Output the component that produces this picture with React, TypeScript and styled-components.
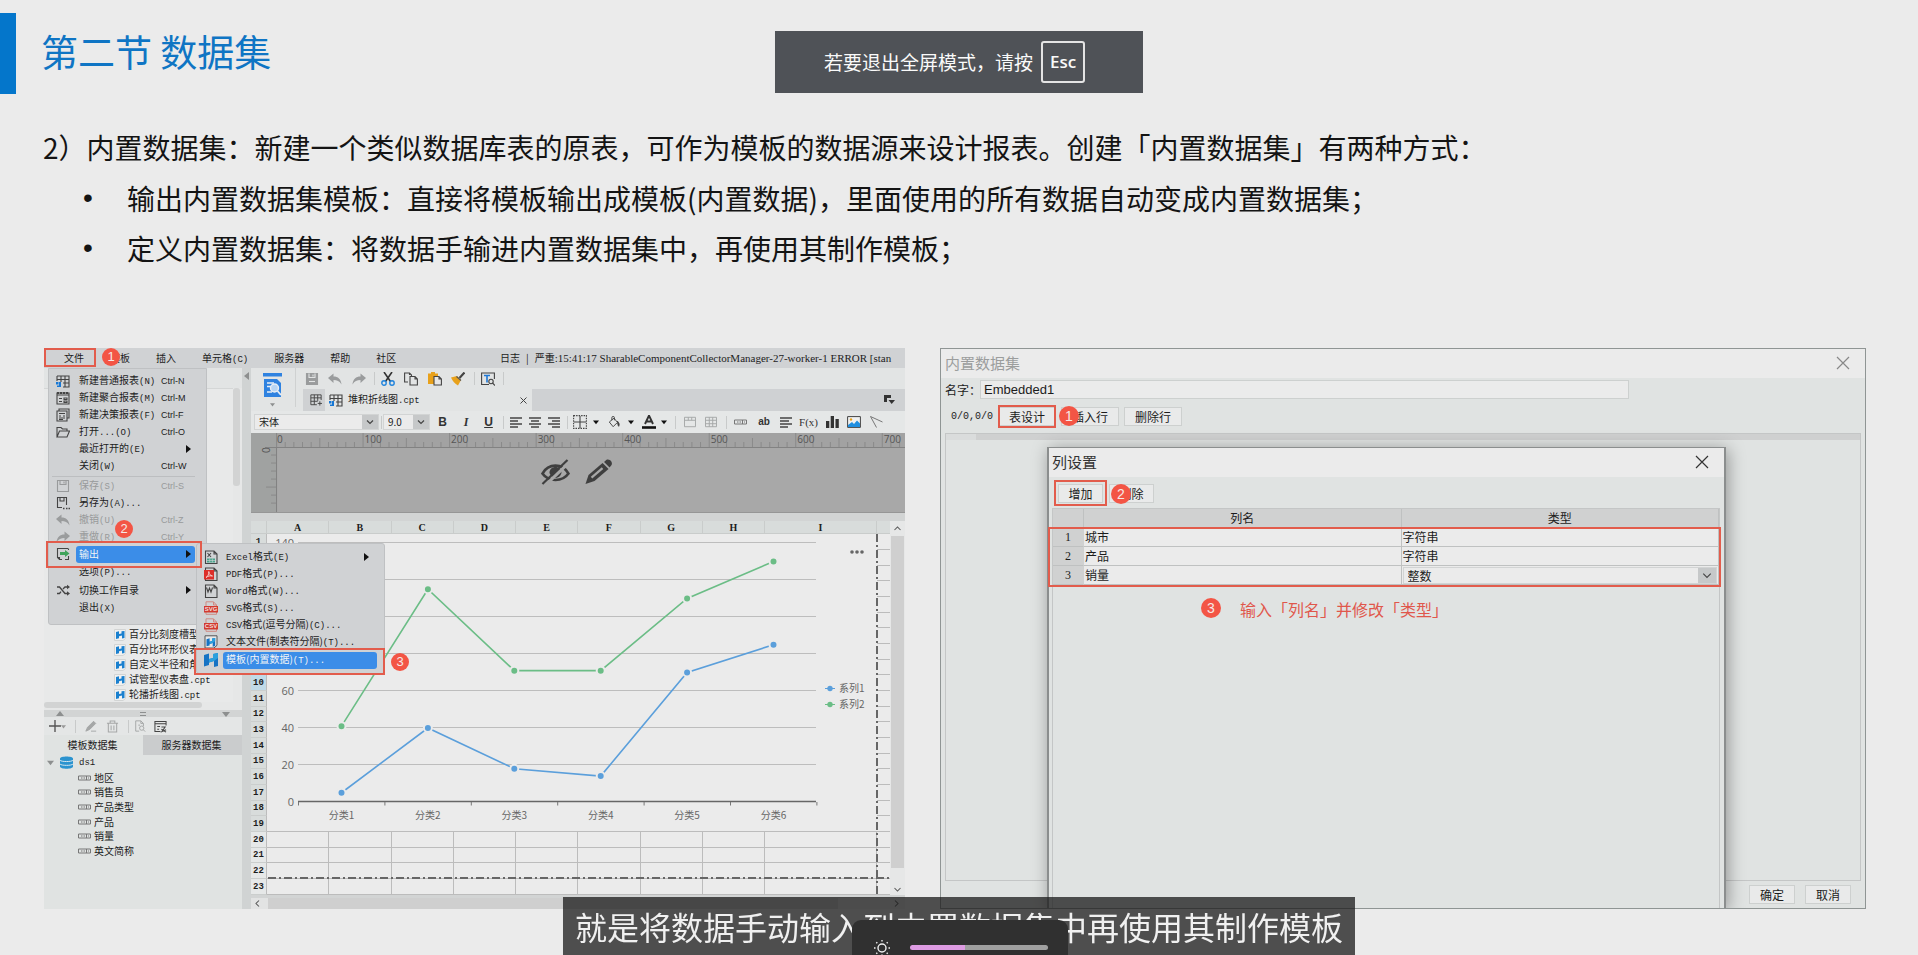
import React from "react";
import styled, { createGlobalStyle, css } from "styled-components";

const cjk = `"Noto Sans CJK SC", sans-serif`;
const mono = `"Liberation Mono", "Noto Sans CJK SC", monospace`;
const serif = `"Liberation Serif", "Noto Sans CJK SC", serif`;
const sans = `"Liberation Sans", "Noto Sans CJK SC", sans-serif`;

const c = {
  page: "#ebebeb",
  panel: "#e0e3e2",
  bar: "#d0d2d4",
  line: "#c4c6c6",
  red: "#e25c4c",
  badge: "#f35545",
  blue: "#3b8de8",
  ink: "#1c1c1c",
};

const GlobalStyle = createGlobalStyle`
  * { box-sizing: border-box; }
  body { margin: 0; background: ${c.page}; font-family: ${cjk}; color: ${c.ink}; }
  button, input, select { font: inherit; color: inherit; margin: 0; padding: 0; border: 0; background: none; border-radius: 0; }
  svg { display: block; flex: none; }
`;

/* ---------- slide ---------- */

const Slide = styled.main`
  min-height: 100vh;
  padding: 13px 0 46px;
  background: ${c.page};
`;
const SlideHead = styled.header`
  display: flex;
  align-items: center;
  gap: 25px;
  &::before {
    content: "";
    width: 16px;
    height: 81px;
    background: #0476cb;
  }
`;
const SlideTitle = styled.h1`
  margin: 0;
  padding-bottom: 5px;
  font-size: 37px;
  line-height: 48px;
  font-weight: 400;
  color: #0f75c4;
`;
const Notes = styled.section`
  padding: 28px 44px 0 43px;
  font-size: 28px;
  line-height: 50px;
  color: #141414;
`;
const Lead = styled.p`
  margin: 0;
  line-height: 51px;
`;
const Points = styled.ul`
  margin: 0;
  padding: 0 0 0 40px;
  list-style: none;
`;
const Point = styled.li`
  display: flex;
  &::before {
    content: "•";
    flex: none;
    width: 44px;
    font-family: ${sans};
  }
`;
const Figures = styled.section`
  display: grid;
  grid-template-columns: 861fr 926fr;
  gap: 35px;
  padding: 75px 52px 0 44px;
`;

/* ---------- annotations ---------- */

const Badge = styled.span<{ $x: number; $y: number; $big?: boolean }>`
  position: absolute;
  z-index: 5;
  left: ${(p) => p.$x}px;
  top: ${(p) => p.$y}px;
  width: ${(p) => (p.$big ? 20 : 18)}px;
  height: ${(p) => (p.$big ? 20 : 18)}px;
  border-radius: 50%;
  background: ${c.badge};
  color: #f6e9e7;
  font: 400 13px/18px ${sans};
  text-align: center;
  ${(p) => p.$big && "line-height: 20px; font-size: 14px;"}
`;
const redFrame = css<{ $inset: string }>`
  position: absolute;
  z-index: 4;
  inset: ${(p) => p.$inset};
  border: 2px solid ${c.red};
  pointer-events: none;
`;
const Frame = styled.span<{ $inset: string }>`
  ${redFrame}
`;
const Anchor = styled.div`
  position: relative;
  display: flex;
`;

/* ---------- designer window ---------- */

const Designer = styled.article`
  position: relative;
  min-width: 0;
  display: flex;
  flex-direction: column;
  overflow: hidden;
  background: #dcdede;
  font-size: 10px;
  line-height: 14px;
`;
const MenuBar = styled.nav`
  position: relative;
  display: flex;
  align-items: center;
  gap: 26px;
  height: 20px;
  padding-left: 20px;
  background: ${c.bar};
`;
const MenuTitle = styled.button`
  white-space: nowrap;
  line-height: 18px;
`;
const Key = styled.span`
  font: 9px/14px ${mono};
`;
const LogLine = styled.div`
  display: flex;
  gap: 6px;
  width: 405px;
  margin-left: auto;
  overflow: hidden;
  white-space: nowrap;
`;
const LogText = styled.span`
  font: 11px/14px ${serif};
`;
const Small = styled.span`
  font-family: ${cjk};
  font-size: 10px;
`;
const Work = styled.div`
  display: flex;
  flex: 1;
`;
const Side = styled.aside`
  width: 198px;
  flex: none;
  display: flex;
  flex-direction: column;
  background: ${c.panel};
`;
const TemplatePane = styled.div`
  display: flex;
  height: 334px;
  padding-top: 20px;
  background: #e2e4e4;
`;
const TemplateList = styled.ul`
  flex: 1;
  min-width: 0;
  margin: 0;
  padding: 0 0 0 70px;
  list-style: none;
  display: flex;
  flex-direction: column;
  justify-content: flex-end;
  background: #e8e9e9;
  border-top: 1px solid #d4d6d6;
  overflow: hidden;
`;
const TemplateItem = styled.li`
  display: flex;
  align-items: center;
  gap: 3px;
  height: 15px;
  white-space: nowrap;
`;
const SideScroll = styled.div`
  width: 9px;
  background: #e6e7e7;
  &::before {
    content: "";
    display: block;
    width: 7px;
    height: 98px;
    border-radius: 3px;
    background: #d2d3d3;
  }
`;
const SideHScroll = styled.div`
  height: 8px;
  background: #e6e7e7;
  &::before {
    content: "";
    display: block;
    width: 80%;
    height: 6px;
    border-radius: 3px;
    background: #d2d3d3;
  }
`;
const Splitter = styled.div`
  display: flex;
  align-items: center;
  justify-content: space-between;
  height: 7px;
  padding: 0 12px;
  background: #d2d4d4;
`;
const SideTools = styled.div`
  display: flex;
  align-items: center;
  height: 18px;
  padding-left: 5px;
  background: #e4e6e6;
`;
const Tabs = styled.div`
  display: grid;
  grid-template-columns: 1fr 1fr;
  height: 20px;
`;
const Tab = styled.button<{ $on?: boolean }>`
  padding-right: 2px;
  background: ${(p) => (p.$on ? c.panel : "#cacccd")};
`;
const Fields = styled.ul`
  flex: 1;
  margin: 0;
  padding: 0;
  list-style: none;
`;
const FieldRow = styled.li<{ $depth: number }>`
  display: flex;
  align-items: center;
  gap: ${(p) => (p.$depth ? 3 : 6)}px;
  height: 15px;
  padding-left: ${(p) => (p.$depth ? 34 : 3)}px;
  &:nth-child(3n) {
    height: 14px;
  }
`;
const Gutter = styled.div`
  width: 9px;
  flex: none;
  padding: 4px 0 0 1px;
  background: #d0d3d3;
`;

/* file menu */
const menuSurface = css`
  position: absolute;
  z-index: 2;
  margin: 0;
  list-style: none;
  background: ${c.bar};
  border: 1px solid #bfc1c3;
  border-radius: 0 0 3px 3px;
`;
const FileMenu = styled.ul`
  ${menuSurface}
  left: 4px;
  top: 20px;
  width: 159px;
  height: 257px;
  padding: 3px 11px 0 3px;
`;
const SubMenu = styled.ul`
  ${menuSurface}
  left: 144px;
  top: -2px;
  width: 189px;
  height: 131px;
  padding: 4px 7px 0;
  border-radius: 3px;
`;
const MenuRow = styled.li<{ $tall?: boolean; $rule?: boolean }>`
  position: relative;
  display: grid;
  grid-template-columns: 20px 1fr;
  align-items: center;
  height: ${(p) => (p.$tall ? 18 : 17)}px;
  padding-left: 4px;
  ${(p) => p.$rule && "margin-top: 3px; box-shadow: 0 -1px #bcbec0;"}
`;
const SubRow = styled(MenuRow)`
  padding-left: 0;
  grid-template-columns: 19px 1fr;
  &:last-child {
    margin-top: 1px;
  }
`;
const MenuButton = styled.button<{ $off?: boolean; $hot?: boolean }>`
  grid-column: 2;
  display: grid;
  grid-template-columns: 82px 1fr 6px;
  align-items: center;
  height: 17px;
  padding: 0 4px 0 3px;
  border-radius: 3px;
  text-align: left;
  white-space: nowrap;
  color: ${(p) => (p.$hot ? "#f2f4f6" : p.$off ? "#989a9b" : c.ink)};
  background: ${(p) => (p.$hot ? c.blue : "none")};
`;
const SubButton = styled(MenuButton)`
  grid-template-columns: 1fr 6px;
  padding-right: 8px;
`;
const Shortcut = styled.span`
  font: 9px/14px ${sans};
`;

/* editor */
const Editor = styled.div`
  flex: 1;
  min-width: 0;
  display: flex;
  flex-direction: column;
  background: #d2d4d4;
`;
const Ribbon = styled.div`
  display: grid;
  grid-template-columns: 52px 1fr;
  height: 43px;
  background: #e2e4e4;
`;
const Preview = styled.button`
  display: flex;
  flex-direction: column;
  align-items: center;
  gap: 5px;
  width: 45px;
  height: 39px;
  padding: 5px 12px 0 10px;
  border-right: 1px solid #cfd1d1;
`;
const IconStrip = styled.div`
  display: flex;
  align-items: center;
  height: 21px;
`;
const Tool = styled.button<{ $w: number }>`
  display: flex;
  align-items: center;
  justify-content: center;
  flex: none;
  width: ${(p) => p.$w}px;
  height: 18px;
  color: #333;
`;
const Sep = styled.span<{ $w: number }>`
  flex: none;
  display: flex;
  justify-content: center;
  width: ${(p) => p.$w}px;
  &::before {
    content: "";
    width: 1px;
    height: 13px;
    background: #c8caca;
  }
`;
const FileTabs = styled.div`
  display: flex;
  height: 22px;
  background: #cfd1d3;
`;
const NewTab = styled.button`
  width: 22px;
  display: flex;
  align-items: center;
  justify-content: center;
  padding-left: 3px;
`;
const FileTab = styled.div`
  display: flex;
  align-items: center;
  gap: 5px;
  width: 207px;
  padding: 0 5px 0 4px;
  background: #e2e4e4;
`;
const CloseTab = styled.button`
  margin-left: auto;
`;
const TabList = styled.button`
  margin-left: auto;
  padding-right: 10px;
`;
const FormatBar = styled.div`
  display: flex;
  align-items: center;
  height: 22px;
  padding-left: 3px;
  background: #e5e7e7;
  overflow: hidden;
`;
const Combo = styled.div<{ $w?: string; $arrow: number; $h: number }>`
  position: relative;
  flex: none;
  display: flex;
  width: ${(p) => p.$w || "100%"};
  height: ${(p) => p.$h}px;
  border: 1px solid #d2d4d4;
  background: ${c.page};
  & > select {
    appearance: none;
    flex: 1;
    min-width: 0;
    padding-left: 4px;
  }
  & > svg {
    align-self: stretch;
    width: ${(p) => p.$arrow}px;
    height: 100%;
    background: #c6c8c9;
    pointer-events: none;
  }
`;
const Letter = styled.span`
  font: 700 12px/14px ${sans};
`;
const Italic = styled(Letter)`
  font-family: ${serif};
  font-style: italic;
`;
const Under = styled(Letter)`
  text-decoration: underline;
`;
const Plain = styled.span`
  font: 700 10px/14px ${sans};
`;
const Canvas = styled.div`
  height: 80px;
  overflow: hidden;
  background: #a8a8a8;
  border-bottom: 1px solid #969696;
`;
const SheetArea = styled.div`
  display: flex;
  margin-top: 8px;
`;
const SheetWrap = styled.div`
  position: relative;
  flex: 1;
  min-width: 0;
`;
const Sheet = styled.table`
  width: 100%;
  table-layout: fixed;
  border-collapse: separate;
  border-spacing: 0;
  font: 700 9px/12px ${mono};
  background: ${c.page};
  th,
  td {
    padding: 0;
    border-right: 1px solid #bcbcbc;
    border-bottom: 1px solid #bcbcbc;
  }
  thead th {
    height: 13px;
    vertical-align: bottom;
    font: 700 10px/10px ${serif};
    background: #d8dcdb;
    border-color: #c9cccb;
  }
  td:last-child,
  th:last-child {
    border-right: 0;
  }
`;
const SheetRow = styled.tr<{ $state: "covered" | "current" | "free" }>`
  height: 16px;
  &:nth-child(3n) {
    height: 15px;
  }
  & > th {
    background: ${(p) => ({ covered: "#d8dcdb", current: "#c0dae8", free: "#e6e8e8" })[p.$state]};
    border-bottom-color: #cbcecd;
  }
`;
const ChartBox = styled.figure`
  position: absolute;
  left: 16px;
  right: 13px;
  top: 13px;
  height: 297px;
  margin: 0;
  background: ${c.page};
`;
const dash = (dir: string) =>
  `repeating-linear-gradient(${dir}, #666 0 8px, transparent 8px 11px, #666 11px 13px, transparent 13px 16px)`;
const BreakX = styled.span`
  position: absolute;
  right: 12px;
  top: 13px;
  bottom: 0;
  width: 2px;
  background: ${dash("to bottom")};
`;
const BreakY = styled.span`
  position: absolute;
  left: 17px;
  right: 0;
  bottom: 16px;
  height: 2px;
  background: ${dash("to right")};
`;
const VScroll = styled.div`
  width: 15px;
  display: flex;
  flex-direction: column;
  align-items: center;
  justify-content: space-between;
  padding: 3px 0 1px;
  background: #e6e7e7;
`;
const VThumb = styled.span`
  flex: 1;
  width: 13px;
  margin: 3px 0 17px;
  background: #cfcfcf;
`;
const HScroll = styled.div`
  display: flex;
  align-items: center;
  height: 11px;
  margin-top: 3px;
  padding: 0 4px 0 2px;
  background: #e2e3e3;
`;
const HThumb = styled.span`
  width: 88%;
  height: 11px;
  margin: 0 auto 0 6px;
  background: #cfcfcf;
`;

/* ---------- data set dialog ---------- */

const Dialog = styled.article`
  position: relative;
  min-width: 0;
  display: flex;
  flex-direction: column;
  overflow: hidden;
  border: 1px solid #8f9594;
  background: ${c.panel};
  font-size: 12px;
  line-height: 16px;
`;
const DialogTitle = styled.header<{ $dim?: boolean }>`
  display: flex;
  align-items: center;
  justify-content: space-between;
  height: 29px;
  padding: 0 15px 2px ${(p) => (p.$dim ? 4 : 3)}px;
  background: ${c.page};
  color: ${(p) => (p.$dim ? "#9b9d9d" : "#333")};
`;
const DialogName = styled.h2`
  margin: 0;
  font-size: 15px;
  line-height: 20px;
  font-weight: 400;
`;
const NameRow = styled.div`
  display: flex;
  align-items: center;
  margin-top: 2px;
  padding-left: 4px;
`;
const NameLabel = styled.label`
  width: 35px;
  white-space: nowrap;
`;
const NameInput = styled.input`
  flex: 1;
  min-width: 0;
  height: 19px;
  margin-right: 236px;
  padding-left: 3px;
  border: 1px solid #cdd0cf;
  background: ${c.page};
  font: 13px/16px ${sans};
`;
const Actions = styled.div`
  display: flex;
  align-items: center;
  gap: 5px;
  margin-top: 8px;
  padding-left: 10px;
`;
const Counter = styled.span`
  width: 42px;
  font: 10px/16px ${mono};
`;
const DialogButton = styled.button<{ $w: number }>`
  width: ${(p) => p.$w}px;
  height: 19px;
  border: 1px solid #cdd0cf;
  background: #e9eaea;
  line-height: 17px;
`;
const GridBox = styled.div`
  flex: 1;
  margin: 7px 4px 0;
  border: 1px solid ${c.line};
  &::before {
    content: "";
    display: block;
    height: 6px;
    background: linear-gradient(#dadcdc, #dadcdc) 0 0 / 30px 6px no-repeat #cfd0d0;
  }
`;
const DialogFoot = styled.footer`
  display: flex;
  justify-content: flex-end;
  gap: 10px;
  padding: 4px 14px 4px;
`;
const ColumnWindow = styled.section`
  position: absolute;
  left: 106px;
  right: 139px;
  top: 98px;
  bottom: -1px;
  display: flex;
  flex-direction: column;
  border: 2px solid #8b8e8e;
  border-top-width: 1px;
  border-bottom: 0;
  background: ${c.panel};
  box-shadow: 2px 2px 16px rgba(0, 0, 0, 0.35);
`;
const ColumnActions = styled.div`
  display: flex;
  gap: 6px;
  padding: 7px 0 5px 9px;
`;
const ColumnBody = styled.div`
  flex: 1;
  margin: 0 4px 0 3px;
  border: 1px solid ${c.line};
  border-bottom: 0;
`;
const Columns = styled.table`
  width: 100%;
  table-layout: fixed;
  border-collapse: separate;
  border-spacing: 0;
  th,
  td {
    height: 19px;
    padding: 0 1px;
    line-height: 16px;
    text-align: left;
    font-weight: 400;
    border-right: 1px solid #bfc1c1;
    border-bottom: 1px solid #bfc1c1;
    background: ${c.page};
  }
  thead th {
    text-align: center;
    background: #d0d1d1;
  }
  tbody th {
    text-align: center;
    font: 12px/16px ${serif};
    background: #d0d1d1;
    border-right-color: #d0d1d1;
  }
`;
const TableAnchor = styled.div`
  position: relative;
`;
const Hint = styled.p`
  position: relative;
  margin: 0 0 0 187px;
  padding-top: 12px;
  font-size: 16px;
  line-height: 24px;
  color: #e0574b;
  white-space: nowrap;
`;

/* ---------- overlays ---------- */

const Toast = styled.div`
  position: fixed;
  z-index: 10;
  top: 31px;
  left: 50%;
  transform: translateX(-50%);
  display: flex;
  align-items: center;
  gap: 8px;
  height: 62px;
  padding: 0 58px 0 49px;
  background: #4f5257;
  color: #fafafa;
  font-size: 19px;
  line-height: 28px;
  white-space: nowrap;
`;
const EscKey = styled.kbd`
  width: 44px;
  height: 42px;
  border: 2px solid #e4e4e4;
  border-radius: 3px;
  font: 600 17px/38px "Open Sans", sans-serif;
  text-align: center;
`;
const Caption = styled.p`
  position: fixed;
  z-index: 10;
  bottom: 0;
  left: 50%;
  transform: translateX(-50%);
  height: 58px;
  margin: 0;
  padding: 5px 12px 0;
  background: rgba(26, 26, 26, 0.75);
  color: #f0f0f0;
  font-size: 32px;
  line-height: 48px;
  white-space: nowrap;
`;
const Brightness = styled.label`
  position: fixed;
  z-index: 11;
  bottom: 0;
  left: calc(50% + 1px);
  transform: translateX(-50%);
  display: flex;
  align-items: center;
  gap: 20px;
  width: 216px;
  height: 35px;
  padding: 20px 20px 0 22px;
  border-radius: 9px 9px 0 0;
  background: #303030;
  overflow: hidden;
`;
const Level = styled.input`
  appearance: none;
  flex: 1;
  min-width: 0;
  height: 5px;
  border-radius: 3px;
  background: linear-gradient(to right, #dd9be2 40%, #9f9f9f 40%);
  &::-webkit-slider-thumb {
    appearance: none;
    width: 1px;
    height: 5px;
  }
`;

/* ---------- icons ---------- */

const Tri = ({ dir = "right", size = 6, fill = "#111" }: { dir?: string; size?: number; fill?: string }) => {
  const d: Record<string, string> = {
    right: "M1 0L6 4L1 8Z",
    left: "M6 0L1 4L6 8Z",
    down: "M0 2H8L4 7Z",
    up: "M0 6H8L4 1Z",
  };
  return (
    <svg width={size} height={size} viewBox="0 0 8 8">
      <path d={d[dir]} fill={fill} />
    </svg>
  );
};
const Chevron = ({ dir = "down", color = "#555" }: { dir?: string; color?: string }) => {
  const d: Record<string, string> = {
    down: "M2 4L6 8L10 4",
    up: "M2 8L6 4L10 8",
    left: "M8 2L4 6L8 10",
    right: "M4 2L8 6L4 10",
  };
  return (
    <svg width="9" height="9" viewBox="0 0 12 12" fill="none" stroke={color} strokeWidth="1.4">
      <path d={d[dir]} />
    </svg>
  );
};
const Cross = ({ size, color }: { size: number; color: string }) => (
  <svg width={size} height={size} viewBox="0 0 14 14" stroke={color} strokeWidth={size < 10 ? 2 : 1.2}>
    <path d="M1 1L13 13M13 1L1 13" />
  </svg>
);
const Ic = ({ children, s = 14, w, color = "#444" }: { children: React.ReactNode; s?: number; w?: number; color?: string }) => (
  <svg width={w || s} height={s} viewBox="0 0 14 14" fill="none" stroke={color} strokeWidth="1.1">
    {children}
  </svg>
);
const NewReport = () => (
  <Ic>
    <path d="M1 2h12v11H7M1 2v5M1 5.500h12M5 2v6M9 2v11M7 9h6" />
    <path d="M0 8h2.500v2.500H0zM3 8h2v5H1v-1.500h2z" fill="#1778d6" stroke="none" />
  </Ic>
);
const NewMerged = () => (
  <Ic>
    <path d="M1 2h12v11H1zM1 4h12" />
    <path d="M1 2h12" strokeWidth="2" strokeDasharray="2 1" />
    <path d="M3 7.500h3M3 10.500h3M8 7h3v1.500H8zM8 10h3v1.500H8z" />
  </Ic>
);
const NewDecision = () => (
  <Ic>
    <path d="M3 3V1h10v9h-2M1 3h10v10H1zM3 5.500h6M3 10h6M3 8h2M7 8h2M3 11.500h4" />
  </Ic>
);
const OpenFolder = () => (
  <Ic>
    <path d="M1 12V2.500h4L6.500 4H11v2M1 12L3.500 6H13.500L11 12Z" />
  </Ic>
);
const SaveIcon = ({ color = "#444", fill = "none" }) => (
  <Ic color={color}>
    <path d="M1.500 1.500h11v11h-11z" fill={fill} />
    <path d="M4 1.500v4h6v-4M8 2.500v2" stroke={fill === "none" ? color : "#e2e4e4"} />
    <path d="M4 9.500h6" stroke={fill === "none" ? "none" : "#e2e4e4"} />
  </Ic>
);
const SaveAs = () => (
  <Ic>
    <path d="M6 11.500H1.500v-10h9V9M4 1.500v3.500h4V1.500" />
    <path d="M7 12.500h1.500M10 12.500h1.500M12.500 12.500H14" strokeWidth="1.6" />
  </Ic>
);
const Undo = ({ flip, color = "#9a9c9d" }: { flip?: boolean; color?: string }) => (
  <svg width="14" height="14" viewBox="0 0 14 14">
    <path
      d={flip ? "M14 6L8.500 1.500V4.500C4 4.500 1 7 0.500 12.500C2.500 9 5 8 8.500 8V11Z" : "M0 6L5.500 1.500V4.500C10 4.500 13 7 13.500 12.500C11.500 9 9 8 5.500 8V11Z"}
      fill={color}
    />
  </svg>
);
const ExportIcon = () => (
  <Ic>
    <path d="M12 1.500H1.500v9l2 2H6M12.500 9v3.500H9M12.500 1.500V3M1.500 10.500h2v2" />
    <path d="M4 5h5V3l4.500 3.500L9 10V8H4z" fill="#3fa45b" stroke="none" />
  </Ic>
);
const Shuffle = () => (
  <Ic>
    <path d="M1 4h2.500L9 10.500h3M1 10.500h2.500L5 8.700M7 6L9 4h3" strokeWidth="1.3" />
    <path d="M11 1.800L14 4L11 6.200ZM11 8.300L14 10.500L11 12.700Z" fill="#444" stroke="none" />
  </Ic>
);
const Doc = ({ children }: { children?: React.ReactNode }) => (
  <Ic>
    <path d="M1.500 1h8.500l3 3v9.500H1.500zM10 1v3h3" />
    {children}
  </Ic>
);
const ExcelIcon = () => (
  <Doc>
    <path d="M3.500 3l3.500 4M7 3L3.500 7" />
    <path d="M3 8.500h8v4H3z" fill="#48a58c" stroke="none" />
    <path d="M3 10.500h8M5.700 8.500v4M8.400 8.500v4" stroke="#d0d2d4" strokeWidth="0.600" />
  </Doc>
);
const PdfIcon = () => (
  <Doc>
    <path d="M0 3h10v9.500H0z" fill="#dd2f2a" stroke="none" />
    <path d="M2 10.500C4 9.500 5 7 4.800 4.500C5 7.500 6.500 8.500 8.500 9C6 8.500 4 9 2 10.500Z" stroke="#f4d8d6" strokeWidth="0.900" />
  </Doc>
);
const WordIcon = () => (
  <Doc>
    <path d="M2.500 3.500L4 8L5.500 4L7 8L8.500 3.500" />
  </Doc>
);
const TagIcon = ({ text }: { text: string }) => (
  <svg width="14" height="14" viewBox="0 0 14 14">
    <path d="M2 6V.8h7.500L12.500 4v2M9.500 1v3h3M2 11v2.300h10.500V11" fill="none" stroke="#d08a83" />
    <rect x="0" y="5" width="14" height="6.500" fill="#d23a2f" />
    <text x="7" y="10.300" fontSize="6" fontWeight="700" textAnchor="middle" fill="#f3dedc" fontFamily="Liberation Sans">
      {text}
    </text>
  </svg>
);
const Logo = ({ framed, s = 14 }: { framed?: boolean; s?: number }) => (
  <svg width={s} height={s} viewBox="0 0 14 14">
    {framed && <path d="M1 .8h12v9.500L10 13H1z" fill="#e8e9e9" stroke="#555" />}
    <g transform={framed ? "translate(2.500 3) scale(.62)" : undefined}>
      <path d="M0 2L5 0.500V6L9 5V1L14 0v13l-4 1V8L5 9.500V12L0 13.500Z" fill="#1673c4" />
      <path d="M5 6L9 5V1L14 0v5L10 8L5 9.500Z" fill="#2ba0dd" />
    </g>
  </svg>
);
const Tree = () => (
  <svg width="12" height="12" viewBox="0 0 12 12">
    <path d="M.5.500h11v9L9 11.500H.5z" fill="#f0f1f1" stroke="#d2d4d4" />
    <path d="M2 3L5 2.300V5L7.500 4.500V2.200L10.500 2v7L8 9.500V6.500L5 7.300V9.300L2 10Z" fill="#1a80cf" />
  </svg>
);
const FieldIcon = () => (
  <svg width="13" height="6" viewBox="0 0 13 6" fill="none" stroke="#777">
    <path d="M.5 1h12v4H.5zM3 3h1.500M5.500 3h1.500M8.500 1v4M10 3h1" />
  </svg>
);
const DataIcon = () => (
  <svg width="13" height="13" viewBox="0 0 13 13">
    <path d="M0 2.500C0-.3 13-.3 13 2.500V10.500C13 13.500 0 13.500 0 10.500Z" fill="#2b93cf" />
    <path d="M0 4.200C1 6 12 6 13 4.200M0 8C1 9.800 12 9.800 13 8" fill="none" stroke="#d6e6ee" strokeWidth="1" />
  </svg>
);
const AlignIcon = ({ rows }: { rows: number[][] }) => (
  <svg width="12" height="11" viewBox="0 0 12 11" stroke="#444" strokeWidth="1.500">
    {rows.map(([a, b], i) => (
      <path key={i} d={`M${a} ${1 + i * 3}H${b}`} />
    ))}
  </svg>
);

/* ---------- content ---------- */

type Entry = {
  label: string;
  key?: string;
  cut?: string;
  icon?: React.ReactNode;
  off?: boolean;
  more?: boolean;
  rule?: boolean;
};

const fileEntries: Entry[] = [
  { label: "新建普通报表", key: "(N)", cut: "Ctrl-N", icon: <NewReport /> },
  { label: "新建聚合报表", key: "(M)", cut: "Ctrl-M", icon: <NewMerged /> },
  { label: "新建决策报表", key: "(F)", cut: "Ctrl-F", icon: <NewDecision /> },
  { label: "打开", key: "...(O)", cut: "Ctrl-O", icon: <OpenFolder /> },
  { label: "最近打开的", key: "(E)", more: true },
  { label: "关闭", key: "(W)", cut: "Ctrl-W" },
  { label: "保存", key: "(S)", cut: "Ctrl-S", icon: <SaveIcon color="#989a9b" />, off: true, rule: true },
  { label: "另存为", key: "(A)...", icon: <SaveAs /> },
  { label: "撤销", key: "(U)", cut: "Ctrl-Z", icon: <Undo />, off: true },
  { label: "重做", key: "(R)", cut: "Ctrl-Y", icon: <Undo flip />, off: true },
];
const lastEntries: Entry[] = [
  { label: "选项", key: "(P)..." },
  { label: "切换工作目录", icon: <Shuffle />, more: true },
  { label: "退出", key: "(X)" },
];
const exportEntries: (Entry & { pre?: string })[] = [
  { pre: "Excel", label: "格式", key: "(E)", icon: <ExcelIcon />, more: true },
  { pre: "PDF", label: "格式", key: "(P)...", icon: <PdfIcon /> },
  { pre: "Word", label: "格式", key: "(W)...", icon: <WordIcon /> },
  { pre: "SVG", label: "格式", key: "(S)...", icon: <TagIcon text="SVG" /> },
  { pre: "CSV", label: "格式(逗号分隔)", key: "(C)...", icon: <TagIcon text="CSV" /> },
  { label: "文本文件(制表符分隔)", key: "(T)...", icon: <Logo framed /> },
];

const MenuEntry = ({ e, tall }: { e: Entry; tall?: boolean }) => (
  <MenuRow $tall={tall} $rule={e.rule}>
    {e.icon}
    <MenuButton $off={e.off}>
      <span>
        {e.label}
        {e.key && <Key>{e.key}</Key>}
      </span>
      <Shortcut>{e.cut}</Shortcut>
      {e.more && <Tri size={8} />}
    </MenuButton>
  </MenuRow>
);

const FileMenuPanel = () => (
  <FileMenu>
    {fileEntries.map((e) => (
      <MenuEntry key={e.label} e={e} />
    ))}
    <MenuRow $tall>
      <ExportIcon />
      <MenuButton $hot>
        <span>输出</span>
        <span />
        <Tri size={8} />
      </MenuButton>
      <Frame $inset="-4px -7px -5px -6px" />
      <Badge $x={63} $y={-25}>2</Badge>
      <SubMenu>
        {exportEntries.map((e) => (
          <SubRow key={(e.pre || "") + e.label}>
            {e.icon}
            <SubButton>
              <span>
                {e.pre && <Key>{e.pre}</Key>}
                {e.label}
                <Key>{e.key}</Key>
              </span>
              {e.more && <Tri size={8} />}
            </SubButton>
          </SubRow>
        ))}
        <SubRow $tall>
          <Logo />
          <SubButton $hot>
            <span>
              模板(内置数据)<Key>(T)...</Key>
            </span>
          </SubButton>
          <Frame $inset="-3px -8px -6px -10px" />
          <Badge $x={187} $y={2}>3</Badge>
        </SubRow>
      </SubMenu>
    </MenuRow>
    {lastEntries.map((e) => (
      <MenuEntry key={e.label} e={e} tall />
    ))}
  </FileMenu>
);

const templates = ["百分比刻度槽型仪", "百分比环形仪表", "自定义半径和角度", "试管型仪表盘", "轮播折线图"];
const fields = ["地区", "销售员", "产品类型", "产品", "销量", "英文简称"];

const SidePanel = () => (
  <Side>
    <TemplatePane>
      <TemplateList>
        {templates.map((t) => (
          <TemplateItem key={t}>
            <Tree />
            <span>
              {t}
              <Key>.cpt</Key>
            </span>
          </TemplateItem>
        ))}
      </TemplateList>
      <SideScroll />
    </TemplatePane>
    <SideHScroll />
    <Splitter>
      <Tri dir="up" fill="#8d8f8f" size={8} />
      <svg width="6" height="4" viewBox="0 0 6 4" stroke="#8d8f8f">
        <path d="M0 .5H6M0 3.500H6" />
      </svg>
      <Tri dir="down" fill="#8d8f8f" size={8} />
    </Splitter>
    <SideTools>
      <Tool $w={12} aria-label="新增"><Ic s={12} color="#555"><path d="M7 0v14M0 7h14" strokeWidth="1.600" /></Ic></Tool>
      <Tri dir="down" size={5} fill="#999" />
      <Sep $w={18} />
      <Tool $w={14} aria-label="编辑">
        <Ic s={12} color="#a5a7a7"><path d="M1 13L3 8.500L10 1.500L12.500 4L5.500 11Z" fill="#a5a7a7" /><path d="M7 13h6" /></Ic>
      </Tool>
      <Tool $w={28} aria-label="删除">
        <Ic s={13} color="#a5a7a7"><path d="M1 3.500h12M4.500 3V1h5v2M2.500 4v9h9V4M5.500 6v5M8.500 6v5" /></Ic>
      </Tool>
      <Sep $w={4} />
      <Tool $w={20} aria-label="预览">
        <Ic s={12} color="#a5a7a7"><path d="M6 13H2V1h6l3 3v3M8 1v3h3M5 6h2" /><circle cx="9" cy="9.500" r="2.500" /><path d="M11 11.500l2 2" /></Ic>
      </Tool>
      <Tool $w={20} aria-label="缓存">
        <Ic s={13}><path d="M13 6V1.500H1v11h6M1 4h12M3.500 7h3M3.500 10h2" /><path d="M8 7.500h4L8.500 12.500L13 10.500M8 10l5 3" /></Ic>
      </Tool>
    </SideTools>
    <Tabs>
      <Tab $on>模板数据集</Tab>
      <Tab>服务器数据集</Tab>
    </Tabs>
    <Fields>
      <FieldRow $depth={0}>
        <Tri dir="down" size={7} fill="#8d8f8f" />
        <DataIcon />
        <Key>ds1</Key>
      </FieldRow>
      {fields.map((f) => (
        <FieldRow key={f} $depth={1}>
          <FieldIcon />
          {f}
        </FieldRow>
      ))}
    </Fields>
  </Side>
);

const RibbonBar = () => (
  <Ribbon>
    <Preview aria-label="预览">
      <svg width="19" height="24" viewBox="0 0 19 24">
        <path d="M0 0h19v3.500H0zM1 6h13l4 4v14H1z" fill="#2f82e0" />
        <path d="M4 10h7M4 13.500h4M4 19h5" stroke="#e8eef5" strokeWidth="1.500" />
        <circle cx="11.500" cy="15" r="4" fill="#b9d5f3" stroke="#e8eef5" strokeWidth="1.400" />
        <path d="M14.500 18L18 22" stroke="#e8eef5" strokeWidth="1.800" />
      </svg>
      <Tri dir="down" size={5} fill="#8d8f8f" />
    </Preview>
    <div>
      <IconStrip>
        <Tool $w={17} aria-label="保存"><SaveIcon color="#9a9c9d" fill="#9a9c9d" /></Tool>
        <Tool $w={30} aria-label="撤销"><Undo /></Tool>
        <Tool $w={17} aria-label="重做"><Undo flip /></Tool>
        <Sep $w={14} />
        <Tool $w={14} aria-label="剪切">
          <Ic><path d="M3 0L9.500 9.500M11 0L4.500 9.500" strokeWidth="1.600" stroke="#333" /><circle cx="3" cy="11" r="2.200" stroke="#1f83dc" strokeWidth="1.400" /><circle cx="11" cy="11" r="2.200" stroke="#1f83dc" strokeWidth="1.400" /></Ic>
        </Tool>
        <Tool $w={32} aria-label="复制">
          <Ic><path d="M4 10H.6V1h4.900l2 2v2M5.500 1v2" /><path d="M6 4.500h5l2.400 2.500v6H6zM11 4.500V7h2.400" /></Ic>
        </Tool>
        <Tool $w={16} aria-label="粘贴">
          <Ic><path d="M0 1.500h3V0h4v1.500h3V12H0z" fill="#e8a11b" stroke="none" /><path d="M6 4.500h5l2.400 2.500v6H6zM11 4.500V7h2.400" fill="#e8e8e8" /></Ic>
        </Tool>
        <Tool $w={30} aria-label="格式刷">
          <Ic><path d="M13.500 0.500L8.500 6" stroke="#444" strokeWidth="2.200" /><path d="M0 5.500L6 4L10 8L7 13.500C4 12 1.500 9 0 5.500Z" fill="#e8a11b" stroke="none" /><path d="M5.500 4.500L10 8.500" stroke="#555" /></Ic>
        </Tool>
        <Sep $w={2} />
        <Tool $w={26} aria-label="查找">
          <Ic><path d="M8 12.500H.6V1h12.800v6" /><path d="M3 3.500h6M6 3.500v7" stroke="#1f78d6" strokeWidth="1.600" /><circle cx="10" cy="9.500" r="2.200" /><path d="M11.500 11l2.500 2.500" /></Ic>
        </Tool>
        <Sep $w={4} />
      </IconStrip>
      <FileTabs>
        <NewTab aria-label="新建">
          <Ic s={12}><path d="M8 12.500H1V1h12v6M1 4.500h12M5 1v11.500M9 1v7M1 8.500h8M9 11h5M11.500 8.500v5" /></Ic>
        </NewTab>
        <FileTab>
          <NewReport />
          <span>
            堆积折线图<Key>.cpt</Key>
          </span>
          <CloseTab aria-label="关闭"><Cross size={7} color="#444" /></CloseTab>
        </FileTab>
        <TabList aria-label="标签列表">
          <svg width="11" height="10" viewBox="0 0 11 10"><path d="M0 0h7v3H3v4H0z" fill="#333" /><path d="M4.500 5h6.500L7.700 9Z" fill="#333" /></svg>
        </TabList>
      </FileTabs>
    </div>
  </Ribbon>
);

const FormatTools = () => (
  <FormatBar>
    <Combo $w="125px" $arrow={16} $h={16}>
      <select aria-label="字体"><option>宋体</option></select>
      <svg viewBox="0 0 16 14" fill="none" stroke="#444" strokeWidth="1.200"><path d="M5 5.500L8 8.500L11 5.500" /></svg>
    </Combo>
    <Sep $w={4} />
    <Combo $w="47px" $arrow={16} $h={16}>
      <select aria-label="字号" ><option>9.0</option></select>
      <svg viewBox="0 0 16 14" fill="none" stroke="#444" strokeWidth="1.200"><path d="M5 5.500L8 8.500L11 5.500" /></svg>
    </Combo>
    <Tool $w={25}><Letter>B</Letter></Tool>
    <Tool $w={22}><Italic>I</Italic></Tool>
    <Tool $w={23}><Under>U</Under></Tool>
    <Sep $w={6} />
    <Tool $w={19} aria-label="左对齐"><AlignIcon rows={[[0, 12], [0, 8], [0, 12], [0, 8]]} /></Tool>
    <Tool $w={19} aria-label="居中"><AlignIcon rows={[[0, 12], [2, 10], [0, 12], [2, 10]]} /></Tool>
    <Tool $w={19} aria-label="右对齐"><AlignIcon rows={[[0, 12], [4, 12], [0, 12], [4, 12]]} /></Tool>
    <Sep $w={9} />
    <Tool $w={16} aria-label="边框"><Ic><path d="M.6.600h12.800v12.800H.6z" strokeDasharray="1.500 1" /><path d="M7 1v12M1 7h12" /></Ic></Tool>
    <Tool $w={16} aria-label="边框选项"><Tri dir="down" /></Tool>
    <Tool $w={20} aria-label="填充"><Ic s={12}><path d="M1.500 7L7 2.500L11 7.500L6 12.500Z" /><path d="M4.500 5V2a1.500 1.500 0 0 1 3 0v3" /><path d="M11 6c2 2 2.500 4 1.500 6c-1-1-1-3-1.500-6z" fill="#333" /></Ic></Tool>
    <Tool $w={14} aria-label="填充选项"><Tri dir="down" /></Tool>
    <Tool $w={21} aria-label="字体颜色"><Ic><path d="M3 9L7 .5L11 9M4.500 6.500h5" strokeWidth="1.900" stroke="#333" /><path d="M0 12.500h14" stroke="#111" strokeWidth="2.600" /></Ic></Tool>
    <Tool $w={10} aria-label="颜色选项"><Tri dir="down" /></Tool>
    <Sep $w={12} />
    <Tool $w={17} aria-label="合并"><Ic s={12} color="#a5a7a7"><path d="M.6 1.500h12.800v11H.6zM.6 5h12.800M5 1.500V5M9 1.500V5" /></Ic></Tool>
    <Tool $w={26} aria-label="拆分"><Ic s={12} color="#a5a7a7"><path d="M.6 1.500h12.800v11H.6zM.6 5h12.800M.6 9h12.800M5 1.500v11M9 1.500v11" /></Ic></Tool>
    <Sep $w={4} />
    <Tool $w={24} aria-label="数据列"><FieldIcon /></Tool>
    <Tool $w={24}><Plain>ab</Plain></Tool>
    <Tool $w={20} aria-label="富文本"><AlignIcon rows={[[0, 12], [0, 9], [0, 12], [0, 8]]} /></Tool>
    <Tool $w={25}><LogText>F(x)</LogText></Tool>
    <Tool $w={22} aria-label="图表"><svg width="13" height="12" viewBox="0 0 13 12"><path d="M0 5h3.300v7H0zM4.700 0H8v12H4.700zM9.500 3h3.300v9H9.500z" fill="#333" /></svg></Tool>
    <Tool $w={22} aria-label="图片"><svg width="14" height="12" viewBox="0 0 14 12"><path d="M.6.600h12.800v10.800H.6z" fill="#f0f1f1" stroke="#444" /><circle cx="4" cy="3.500" r="1.200" fill="#e8a11b" /><path d="M1 9L5 6L7 8L10 4.500L13 7.500V11H1Z" fill="#1f8fe0" /></svg></Tool>
    <Tool $w={22} aria-label="斜线"><svg width="13" height="12" viewBox="0 0 13 12" fill="none" stroke="#777"><path d="M.5.500L12.500 6M.5.500L6.500 11.500" /></svg></Tool>
  </FormatBar>
);

const rulerStep = 86.4;
const RulerCanvas = () => (
  <Canvas>
    <svg width="100%" height="79" viewBox="0 0 653 79" preserveAspectRatio="xMinYMin slice">
      <rect width="653" height="14" fill="#a2a2a2" />
      <rect width="25" height="79" fill="#a0a2a1" />
      <path d="M25.500 0V79M14 14.500H653" stroke="#828282" />
      {Array.from({ length: 73 }, (_, i) => {
        const x = 25.500 + (i * rulerStep) / 10;
        const top = i % 10 === 0 ? 0 : i % 5 === 0 ? 5 : 9;
        return <path key={i} d={`M${x} ${top}V14`} stroke="#8a8a8a" />;
      })}
      {Array.from({ length: 7 }, (_, i) => (
        <path key={i} d={`M${i % 5 === 4 ? 15 : 20} ${22 + i * 8}H25`} stroke="#8a8a8a" />
      ))}
      {Array.from({ length: 8 }, (_, i) => (
        <text key={i} x={26 + (i ? 1 : 0) + i * rulerStep} y="10" fontSize="10" fill="#555" fontFamily="Open Sans">
          {i * 100}
        </text>
      ))}
      <text x="0" y="0" transform="translate(19 20) rotate(-90)" fontSize="10" fill="#555" fontFamily="Open Sans">0</text>
      <g transform="translate(290 27)">
        <path d="M1 13.500C7 3 21 3 27 13.500C21 22 7 22 1 13.500Z" fill="none" stroke="#3f3f3f" strokeWidth="2.600" />
        <path d="M8 13C8 5 20 5 20 13C18 20 10 19 8 13Z" fill="#3f3f3f" />
        <path d="M3 26L28 2" stroke="#a8a8a8" strokeWidth="3" />
        <path d="M1 24L26 0" stroke="#3f3f3f" strokeWidth="2.200" />
      </g>
      <g transform="translate(334 26)">
        <path d="M0 25L3 16L17 4L23 10L9 22Z" fill="#3f3f3f" />
        <path d="M6 18.500L17 9" stroke="#a8a8a8" strokeWidth="2.200" />
        <path d="M18.500 3L21 .8C24 -.5 27.500 3 26 6L24 8.500Z" fill="#3f3f3f" />
      </g>
    </svg>
  </Canvas>
);

const seriesA = [5, 40, 18, 14, 70, 85];
const seriesB = [41, 115, 71, 71, 110, 130];
const px = (i: number) => 74.500 + i * 86.400;
const py = (v: number) => 268 - v * 1.850;
const Series = ({ data, color }: { data: number[]; color: string }) => (
  <g>
    <polyline points={data.map((v, i) => `${px(i)},${py(v)}`).join(" ")} fill="none" stroke={color} strokeWidth="1.600" />
    {data.map((v, i) => (
      <circle key={i} cx={px(i)} cy={py(v)} r="4" fill={color} stroke={c.page} strokeWidth="2" />
    ))}
  </g>
);
const LineChart = () => (
  <ChartBox>
    <svg width="100%" height="297" viewBox="0 0 609 297" preserveAspectRatio="xMinYMin meet" fontFamily="Noto Sans CJK SC">
      {[0, 20, 40, 60, 80, 100, 120, 140].map((v) => (
        <g key={v}>
          <path d={`M31 ${Math.round(py(v)) - 0.500}H549`} stroke={v ? "#bdbdbd" : "#666"} strokeWidth={v ? 1 : 1.600} />
          <text x="27" y={py(v) + 4} fontSize="11" fill="#666" textAnchor="end" fontFamily="Open Sans">{v}</text>
        </g>
      ))}
      {[0, 1, 2, 3, 4, 5, 6].map((i) => (
        <path key={i} d={`M${31.500 + i * 86.400} 268v3.500`} stroke="#777" />
      ))}
      {seriesA.map((_, i) => (
        <text key={i} x={px(i)} y="285" fontSize="10" fill="#666" textAnchor="middle">分类{i + 1}</text>
      ))}
      <Series data={seriesB} color="#6bbd86" />
      <Series data={seriesA} color="#5b9fdb" />
      {["#5b9fdb", "#6bbd86"].map((col, i) => (
        <g key={col}>
          <path d={`M558 ${154.500 + i * 16}h10`} stroke={col} />
          <circle cx="563" cy={154.500 + i * 16} r="2.700" fill={col} />
          <text x="572" y={158 + i * 16} fontSize="10" fill="#666">系列{i + 1}</text>
        </g>
      ))}
      {[0, 5, 10].map((d) => (
        <circle key={d} cx={585 + d} cy="18" r="1.800" fill="#666" />
      ))}
    </svg>
  </ChartBox>
);

const letters = "ABCDEFGHI".split("");
const SheetView = () => (
  <SheetArea>
    <SheetWrap>
      <Sheet>
        <colgroup>
          <col width="16" />
          {letters.map((l) => (
            <col key={l} width={l === "I" ? 112 : undefined} />
          ))}
          <col width="13" />
        </colgroup>
        <thead>
          <tr>
            <th />
            {letters.map((l) => (
              <th key={l}>{l}</th>
            ))}
            <th />
          </tr>
        </thead>
        <tbody>
          {Array.from({ length: 23 }, (_, i) => (
            <SheetRow key={i} $state={i === 9 ? "current" : i < 19 ? "covered" : "free"}>
              <th>{i + 1}</th>
              {letters.map((l) => (
                <td key={l} />
              ))}
              <td />
            </SheetRow>
          ))}
        </tbody>
      </Sheet>
      <LineChart />
      <BreakX />
      <BreakY />
    </SheetWrap>
    <VScroll>
      <Chevron dir="up" />
      <VThumb />
      <Chevron dir="down" />
    </VScroll>
  </SheetArea>
);

const DesignerWindow = () => (
  <Designer>
    <MenuBar>
      <MenuTitle>文件</MenuTitle>
      <MenuTitle>模板</MenuTitle>
      <MenuTitle>插入</MenuTitle>
      <MenuTitle>
        单元格<Key>(C)</Key>
      </MenuTitle>
      <MenuTitle>服务器</MenuTitle>
      <MenuTitle>帮助</MenuTitle>
      <MenuTitle>社区</MenuTitle>
      <LogLine>
        <span>日志</span>
        <span>|</span>
        <LogText>
          <Small>严重</Small>:15:41:17 SharableComponentCollectorManager-27-worker-1 ERROR [stan
        </LogText>
      </LogLine>
      <Frame $inset="0 calc(100% - 52px) 1px 0" />
      <Badge $x={58} $y={0}>1</Badge>
      <FileMenuPanel />
    </MenuBar>
    <Work>
      <SidePanel />
      <Gutter>
        <Tri dir="left" size={8} fill="#8d8f8f" />
      </Gutter>
      <Editor>
        <RibbonBar />
        <FormatTools />
        <RulerCanvas />
        <SheetView />
        <HScroll>
          <Chevron dir="left" />
          <HThumb />
          <Chevron dir="right" />
        </HScroll>
      </Editor>
    </Work>
  </Designer>
);

const DataSetDialog = () => (
  <Dialog>
    <DialogTitle $dim>
      <DialogName>内置数据集</DialogName>
      <button aria-label="关闭"><Cross size={14} color="#888" /></button>
    </DialogTitle>
    <NameRow>
      <NameLabel htmlFor="ds-name">名字：</NameLabel>
      <NameInput id="ds-name" defaultValue="Embedded1" />
    </NameRow>
    <Actions>
      <Counter>0/0,0/0</Counter>
      <Anchor>
        <DialogButton $w={58}>表设计</DialogButton>
        <Frame $inset="-2px 0" />
      </Anchor>
      <Anchor>
        <DialogButton $w={58}>插入行</DialogButton>
        <Badge $big $x={-2} $y={-1}>1</Badge>
      </Anchor>
      <DialogButton $w={58}>删除行</DialogButton>
    </Actions>
    <GridBox />
    <DialogFoot>
      <DialogButton $w={46}>确定</DialogButton>
      <DialogButton $w={46}>取消</DialogButton>
    </DialogFoot>
    <ColumnWindow>
      <DialogTitle>
        <DialogName>列设置</DialogName>
        <button aria-label="关闭"><Cross size={14} color="#333" /></button>
      </DialogTitle>
      <ColumnActions>
        <Anchor>
          <DialogButton $w={45}>增加</DialogButton>
          <Frame $inset="-4px -4px -3px" />
        </Anchor>
        <Anchor>
          <DialogButton $w={45}>删除</DialogButton>
          <Badge $big $x={2} $y={0}>2</Badge>
        </Anchor>
      </ColumnActions>
      <ColumnBody>
        <TableAnchor>
          <Columns>
            <colgroup>
              <col width="31" />
              <col />
              <col />
            </colgroup>
            <thead>
              <tr>
                <th />
                <th>列名</th>
                <th>类型</th>
              </tr>
            </thead>
            <tbody>
              <tr>
                <th>1</th>
                <td>城市</td>
                <td>字符串</td>
              </tr>
              <tr>
                <th>2</th>
                <td>产品</td>
                <td>字符串</td>
              </tr>
              <tr>
                <th>3</th>
                <td>销量</td>
                <td>
                  <Combo $arrow={18} $h={17}>
                    <select aria-label="类型"><option>整数</option></select>
                    <svg viewBox="0 0 18 16" fill="none" stroke="#444" strokeWidth="1.200"><path d="M5 6L9 10L13 6" /></svg>
                  </Combo>
                </td>
              </tr>
            </tbody>
          </Columns>
          <Frame $inset="18px -2px -2px -5px" />
        </TableAnchor>
        <Hint>
          <Badge $big $x={-39} $y={13}>3</Badge>
          输入「列名」并修改「类型」
        </Hint>
      </ColumnBody>
    </ColumnWindow>
  </Dialog>
);

export default function App() {
  return (
    <>
      <GlobalStyle />
      <Slide>
        <SlideHead>
          <SlideTitle>第二节 数据集</SlideTitle>
        </SlideHead>
        <Notes>
          <Lead>2）内置数据集：新建一个类似数据库表的原表，可作为模板的数据源来设计报表。创建「内置数据集」有两种方式：</Lead>
          <Points>
            <Point>输出内置数据集模板：直接将模板输出成模板(内置数据)，里面使用的所有数据自动变成内置数据集；</Point>
            <Point>定义内置数据集：将数据手输进内置数据集中，再使用其制作模板；</Point>
          </Points>
        </Notes>
        <Figures>
          <DesignerWindow />
          <DataSetDialog />
        </Figures>
      </Slide>
      <Toast role="status">
        若要退出全屏模式，请按<EscKey>Esc</EscKey>
      </Toast>
      <Caption>就是将数据手动输入到内置数据集中再使用其制作模板</Caption>
      <Brightness>
        <svg width="16" height="16" viewBox="0 0 16 16" fill="none" stroke="#f0f0f0" strokeWidth="1.400">
          <circle cx="8" cy="8" r="4" />
          <path d="M8 0v1.500M8 14.500V16M0 8h1.500M14.500 8H16M2.300 2.300l1 1M12.700 12.700l1 1M2.300 13.700l1-1M12.700 3.300l1-1" />
        </svg>
        <Level type="range" defaultValue={40} aria-label="亮度" />
      </Brightness>
    </>
  );
}
